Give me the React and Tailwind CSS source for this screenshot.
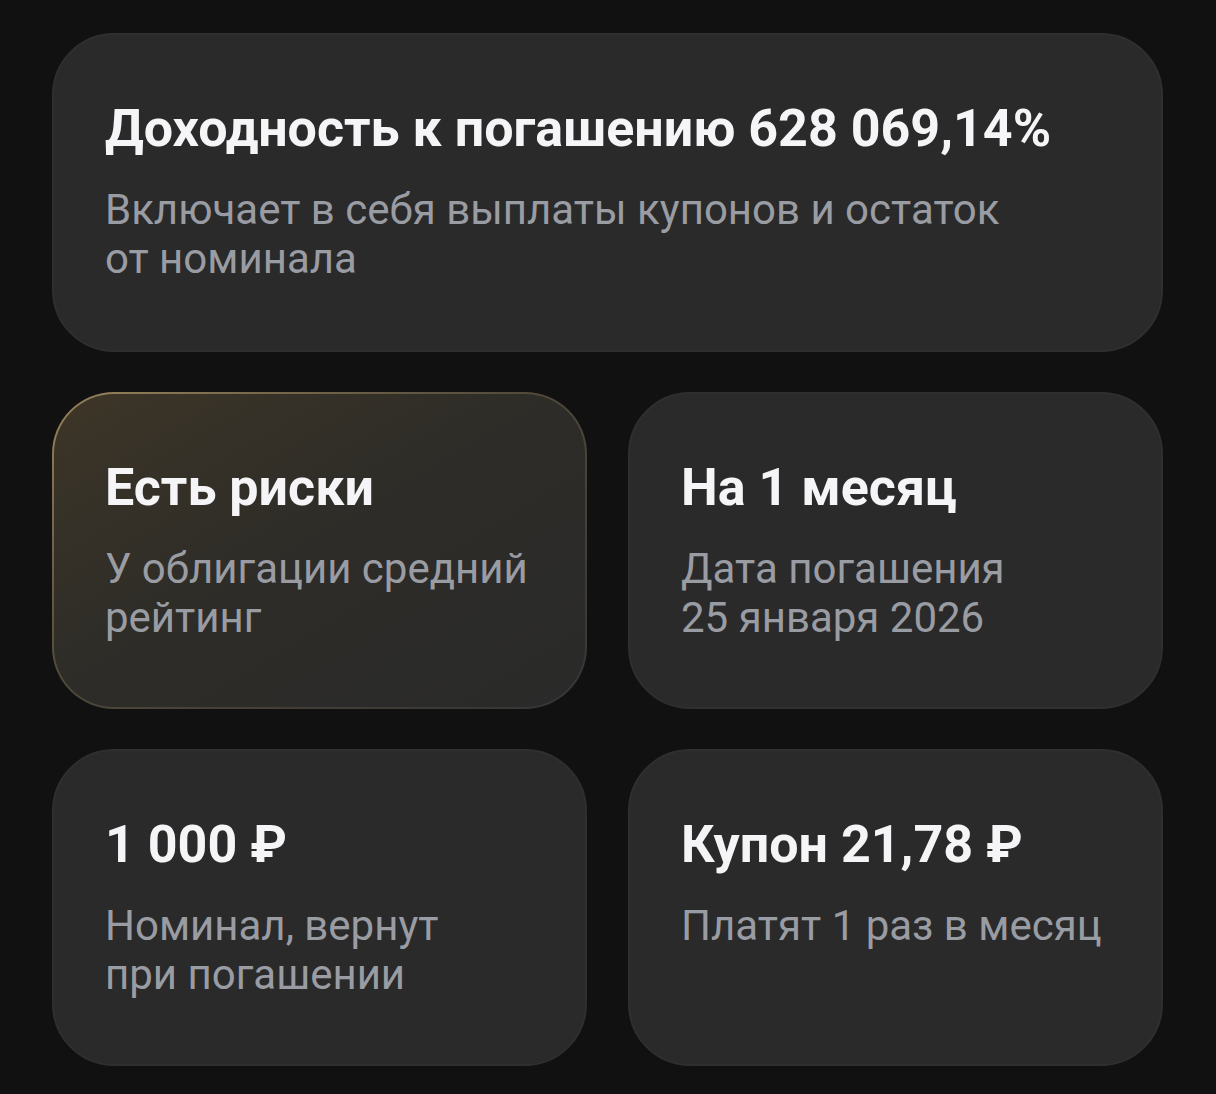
import React from "react";

const font = { fontFamily: "Roboto, 'Noto Sans', sans-serif" };

function Card({ title, lines, gold }) {
  const content = (
    <>
      <div className="text-[52px] leading-[60px] font-bold text-[#f5f5f7]">{title}</div>
      <div className="mt-[26px] text-[42px] leading-[49px] text-[#9a9ca3]">
        {lines.map((l, i) => (
          <div key={i}>{l}</div>
        ))}
      </div>
    </>
  );
  if (gold) {
    return (
      <div className="rounded-[62px] p-[2px] bg-linear-to-br from-[#98845c] via-[#51493a] via-45% to-[#353535]">
        <div className="h-full rounded-[60px] bg-linear-to-br from-[#3d3527] via-[#2d2c28] via-50% to-[#2a2a2a] pl-[51px] pr-[20px] pt-[64px] pb-[65px]">
          {content}
        </div>
      </div>
    );
  }
  return (
    <div className="rounded-[62px] bg-[#2a2a2a] border-2 border-[#2f2f2f] pl-[51px] pr-[20px] pt-[64px] pb-[65px]">
      {content}
    </div>
  );
}

export default function App() {
  return (
    <div className="min-h-[1094px] w-[1216px] bg-[#111111] pl-[52px] pr-[53px] pt-[33px]" style={font}>
      <div className="rounded-[62px] bg-[#2a2a2a] border-2 border-[#2f2f2f] pl-[51px] pr-[20px] pt-[64px] pb-[67px]">
        <div className="text-[52px] leading-[60px] font-bold text-[#f5f5f7]">
          Доходность к погашению 628&nbsp;069,14%
        </div>
        <div className="mt-[26px] text-[42px] leading-[49px] text-[#9a9ca3]">
          <div>Включает в себя выплаты купонов и остаток</div>
          <div>от номинала</div>
        </div>
      </div>
      <div className="mt-[40px] grid grid-cols-2 gap-x-[41px] gap-y-[40px]">
        <Card gold title="Есть риски" lines={["У облигации средний", "рейтинг"]} />
        <Card title="На 1 месяц" lines={["Дата погашения", "25 января 2026"]} />
        <Card title="1 000 ₽" lines={["Номинал, вернут", "при погашении"]} />
        <Card title="Купон 21,78 ₽" lines={["Платят 1 раз в месяц"]} />
      </div>
    </div>
  );
}
